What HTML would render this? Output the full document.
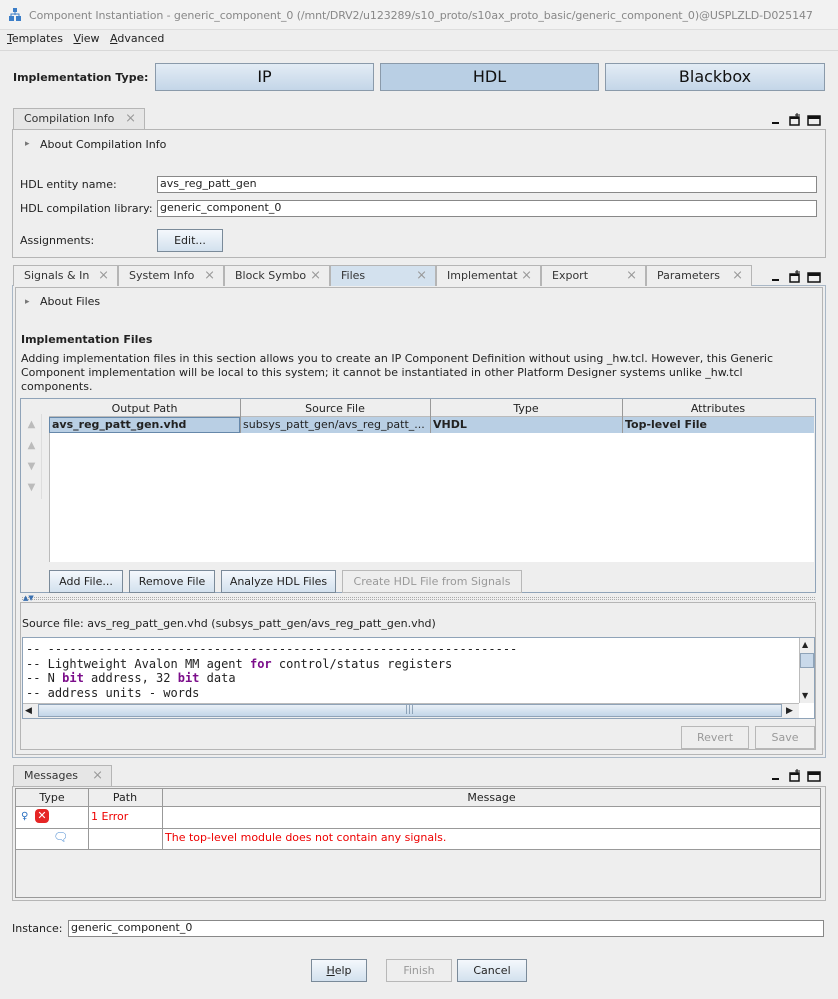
<!DOCTYPE html>
<html><head><meta charset="utf-8"><style>
*{box-sizing:border-box;margin:0;padding:0}
body{width:838px;height:999px;background:#eeeeee;font-family:"DejaVu Sans","Liberation Sans",sans-serif;font-size:11px;color:#222;position:relative;overflow:hidden}
.a{position:absolute}
.t{position:absolute;white-space:nowrap;line-height:14px}
.btn{position:absolute;border:1px solid #7a8a99;background:linear-gradient(#f4f8fc,#d3e1ee);text-align:center;font-size:11px;line-height:21px;color:#222}
.dis{border-color:#b8b8b8;background:#eeeeee;color:#999}
.inp{position:absolute;background:#fff;border:1px solid #888;padding-left:2px;line-height:14px;font-size:11px}
.tab{position:absolute;top:0;height:21px;border:1px solid #b5b5b5;border-bottom:none;background:#eeeeee;padding-left:10px;line-height:20px;font-size:11px;color:#333}
.tab .x{position:absolute;right:8px;top:0;color:#999;font-size:13px}
.big{position:absolute;top:63px;height:28px;border:1px solid #8a9aaa;background:linear-gradient(#e3ecf5,#c4d6e8);text-align:center;font-size:16px;line-height:26px;color:#111}
.mono{font-family:"DejaVu Sans Mono","Liberation Mono",monospace;font-size:12px}
.kw{color:#7b0d8a;font-weight:bold}
.wc{position:absolute}
</style></head><body>
<div class="a" style="left:0;top:0;width:838px;height:30px;background:#f2f2f2;border-bottom:1px solid #ddd"></div>
<svg class="a" style="left:9px;top:8px" width="14" height="14"><rect x="4" y="0" width="4" height="4" fill="#3c7ec8"/><rect x="0" y="8" width="5" height="5" fill="#3c7ec8"/><rect x="7" y="8" width="5" height="5" fill="#3c7ec8"/><path d="M6 4v3M2 8V6h8v2" stroke="#3c7ec8" fill="none"/></svg>
<div class="t" style="left:29px;top:9px;font-size:11px;color:#888;letter-spacing:-0.1px">Component Instantiation - generic_component_0 (/mnt/DRV2/u123289/s10_proto/s10ax_proto_basic/generic_component_0)@USPLZLD-D025147</div>
<div class="t" style="left:7px;top:32px"><u>T</u>emplates&nbsp;&nbsp; <u>V</u>iew&nbsp;&nbsp; <u>A</u>dvanced</div>
<div class="a" style="left:0;top:50px;width:838px;height:1px;background:#d8d8d8"></div>
<div class="t" style="left:13px;top:71px;font-weight:bold;font-size:11px">Implementation Type:</div>
<div class="big" style="left:155px;width:219px">IP</div>
<div class="big" style="left:380px;width:219px;background:#b9cfe4">HDL</div>
<div class="big" style="left:605px;width:220px">Blackbox</div>

<svg width="0" height="0" style="position:absolute"><defs><g id="wc"><rect x="0" y="9" width="7" height="2" fill="#111"/><rect x="18" y="4" width="9" height="8" fill="none" stroke="#111" stroke-width="1.5"/><rect x="18" y="4" width="9" height="2" fill="#111"/><path d="M25 0v5M23 2h5" stroke="#111"/><rect x="36" y="3" width="12" height="9" fill="none" stroke="#111" stroke-width="1.5"/><rect x="36" y="3" width="12" height="3" fill="#111"/></g></defs></svg>

<div class="a" style="left:12px;top:129px;width:814px;height:129px;border:1px solid #b5b5b5"></div>
<div class="tab" style="left:13px;top:108px;width:132px;background:#e6e6e6">Compilation Info<span class="x">⨯</span></div>
<svg class="wc" style="left:772px;top:113px" width="50" height="14"><use href="#wc"/></svg>
<div class="t" style="left:25px;top:137px;font-size:9px;color:#777">▸</div>
<div class="t" style="left:40px;top:138px">About Compilation Info</div>
<div class="t" style="left:20px;top:178px">HDL entity name:</div>
<div class="inp" style="left:157px;top:176px;width:660px;height:17px">avs_reg_patt_gen</div>
<div class="t" style="left:20px;top:202px">HDL compilation library:</div>
<div class="inp" style="left:157px;top:200px;width:660px;height:17px">generic_component_0</div>
<div class="t" style="left:20px;top:234px">Assignments:</div>
<div class="btn" style="left:157px;top:229px;width:66px;height:23px">Edit...</div>

<div class="a" style="left:12px;top:285px;width:814px;height:473px;border:1px solid #a9b7c6"></div>
<div class="a" style="left:15px;top:287px;width:808px;height:468px;border:1px solid #b5b5b5"></div>
<div class="tab" style="left:13px;top:265px;width:105px">Signals &amp; In<span class="x">⨯</span></div>
<div class="tab" style="left:118px;top:265px;width:106px">System Info<span class="x">⨯</span></div>
<div class="tab" style="left:224px;top:265px;width:106px">Block Symbo<span class="x">⨯</span></div>
<div class="tab" style="left:330px;top:265px;width:106px;background:#d3e1ee">Files<span class="x">⨯</span></div>
<div class="tab" style="left:436px;top:265px;width:105px">Implementat<span class="x">⨯</span></div>
<div class="tab" style="left:541px;top:265px;width:105px">Export<span class="x">⨯</span></div>
<div class="tab" style="left:646px;top:265px;width:106px">Parameters<span class="x">⨯</span></div>
<svg class="wc" style="left:772px;top:270px" width="50" height="14"><use href="#wc"/></svg>
<div class="t" style="left:25px;top:295px;font-size:9px;color:#777">▸</div>
<div class="t" style="left:40px;top:295px">About Files</div>
<div class="t" style="left:21px;top:333px;font-weight:bold">Implementation Files</div>
<div class="t" style="left:21px;top:352px;line-height:14px">Adding implementation files in this section allows you to create an IP Component Definition without using _hw.tcl. However, this Generic<br>Component implementation will be local to this system; it cannot be instantiated in other Platform Designer systems unlike _hw.tcl<br>components.</div>
<div class="a" style="left:20px;top:398px;width:796px;height:195px;border:1px solid #8fa3b8;background:#eeeeee"></div>
<div class="a" style="left:49px;top:399px;width:765px;height:163px;background:#fff;border-left:1px solid #bbb"></div>
<div class="a" style="left:49px;top:399px;width:765px;height:18px;background:#eeeeee;border-bottom:1px solid #bbb"></div>
<div class="a" style="left:49px;top:417px;width:765px;height:16px;background:#b9cfe4"></div>
<div class="a" style="left:240px;top:399px;width:1px;height:34px;background:#999"></div>
<div class="a" style="left:430px;top:399px;width:1px;height:34px;background:#999"></div>
<div class="a" style="left:622px;top:399px;width:1px;height:34px;background:#999"></div>
<div class="a" style="left:49px;top:417px;width:191px;height:16px;border:1px solid #6688aa"></div>
<div class="t" style="left:49px;top:402px;width:191px;text-align:center">Output Path</div>
<div class="t" style="left:240px;top:402px;width:190px;text-align:center">Source File</div>
<div class="t" style="left:430px;top:402px;width:192px;text-align:center">Type</div>
<div class="t" style="left:622px;top:402px;width:192px;text-align:center">Attributes</div>
<div class="t" style="left:52px;top:418px;font-weight:bold">avs_reg_patt_gen.vhd</div>
<div class="t" style="left:243px;top:418px">subsys_patt_gen/avs_reg_patt_...</div>
<div class="t" style="left:433px;top:418px;font-weight:bold">VHDL</div>
<div class="t" style="left:625px;top:418px;font-weight:bold">Top-level File</div>
<div class="a" style="left:22px;top:414px;width:20px;height:85px;border-right:1px solid #ddd;color:#bbb;font-size:10px;line-height:21px;text-align:center">▲<br>▲<br>▼<br>▼</div>
<div class="btn" style="left:49px;top:570px;width:74px;height:23px">Add File...</div>
<div class="btn" style="left:129px;top:570px;width:86px;height:23px">Remove File</div>
<div class="btn" style="left:221px;top:570px;width:115px;height:23px">Analyze HDL Files</div>
<div class="btn dis" style="left:342px;top:570px;width:180px;height:23px">Create HDL File from Signals</div>
<div class="a" style="left:22px;top:597px;width:793px;height:3px;border-top:1px dotted #aaa;border-bottom:1px dotted #aaa"></div>
<div class="t" style="left:23px;top:591px;font-size:7px;color:#3a70b0">▲▼</div>
<div class="a" style="left:20px;top:602px;width:796px;height:148px;border:1px solid #b5b5b5"></div>
<div class="t" style="left:22px;top:617px">Source file: avs_reg_patt_gen.vhd (subsys_patt_gen/avs_reg_patt_gen.vhd)</div>
<div class="a" style="left:22px;top:637px;width:793px;height:82px;background:#fff;border:1px solid #8fa3b8"></div>
<div class="t mono" style="left:26px;top:642px;line-height:14.5px">-- -----------------------------------------------------------------<br>-- Lightweight Avalon MM agent <span class="kw">for</span> control/status registers<br>-- N <span class="kw">bit</span> address, 32 <span class="kw">bit</span> data<br>-- address units - words</div>
<div class="a" style="left:23px;top:703px;width:776px;height:15px;background:#eeeeee;border-top:1px solid #bbb"></div>
<div class="a" style="left:38px;top:704px;width:744px;height:13px;background:linear-gradient(#e9f0f7,#c2d5e8);border:1px solid #8fa3b8"></div>
<div class="t" style="left:25px;top:704px;font-size:9px">◀</div>
<div class="t" style="left:786px;top:704px;font-size:9px">▶</div>
<div class="t" style="left:405px;top:703px;font-size:9px;color:#7890a8">|||</div>
<div class="a" style="left:799px;top:638px;width:15px;height:65px;background:#eeeeee;border-left:1px solid #bbb"></div>
<div class="a" style="left:800px;top:653px;width:14px;height:15px;background:#c9d9ea;border:1px solid #8fa3b8"></div>
<div class="t" style="left:802px;top:638px;font-size:8px">▲</div>
<div class="t" style="left:802px;top:689px;font-size:8px">▼</div>
<div class="btn dis" style="left:681px;top:726px;width:68px;height:23px">Revert</div>
<div class="btn dis" style="left:755px;top:726px;width:60px;height:23px">Save</div>

<div class="a" style="left:12px;top:786px;width:814px;height:115px;border:1px solid #b5b5b5"></div>
<div class="tab" style="left:13px;top:765px;width:99px;background:#e6e6e6">Messages<span class="x">⨯</span></div>
<svg class="wc" style="left:772px;top:769px" width="50" height="14"><use href="#wc"/></svg>
<div class="a" style="left:15px;top:788px;width:806px;height:110px;background:#eeeeee;border:1px solid #999"></div>
<div class="a" style="left:16px;top:806px;width:804px;height:44px;background:#fff;border-top:1px solid #999;border-bottom:1px solid #999"></div>
<div class="a" style="left:16px;top:828px;width:804px;height:1px;background:#999"></div>
<div class="a" style="left:88px;top:789px;width:1px;height:61px;background:#999"></div>
<div class="a" style="left:162px;top:789px;width:1px;height:61px;background:#999"></div>
<div class="t" style="left:16px;top:791px;width:72px;text-align:center">Type</div>
<div class="t" style="left:88px;top:791px;width:74px;text-align:center">Path</div>
<div class="t" style="left:162px;top:791px;width:659px;text-align:center">Message</div>
<div class="t" style="left:21px;top:810px;color:#2a6fc0;font-size:10px">♀</div>
<div class="a" style="left:35px;top:809px;width:14px;height:14px;border-radius:4px;background:#e52525;color:#fff;font-size:11px;line-height:14px;text-align:center;font-weight:bold">✕</div>
<div class="t" style="left:91px;top:810px;color:#e00">1 Error</div>
<div class="t" style="left:53px;top:830px;color:#4a8ad0;font-size:12px">🗨</div>
<div class="t" style="left:165px;top:831px;color:#e00">The top-level module does not contain any signals.</div>

<div class="t" style="left:12px;top:922px;font-size:11px">Instance:</div>
<div class="inp" style="left:68px;top:920px;width:756px;height:17px">generic_component_0</div>
<div class="btn" style="left:311px;top:959px;width:56px;height:23px"><u>H</u>elp</div>
<div class="btn dis" style="left:386px;top:959px;width:66px;height:23px">Finish</div>
<div class="btn" style="left:457px;top:959px;width:70px;height:23px">Cancel</div>
</body></html>
